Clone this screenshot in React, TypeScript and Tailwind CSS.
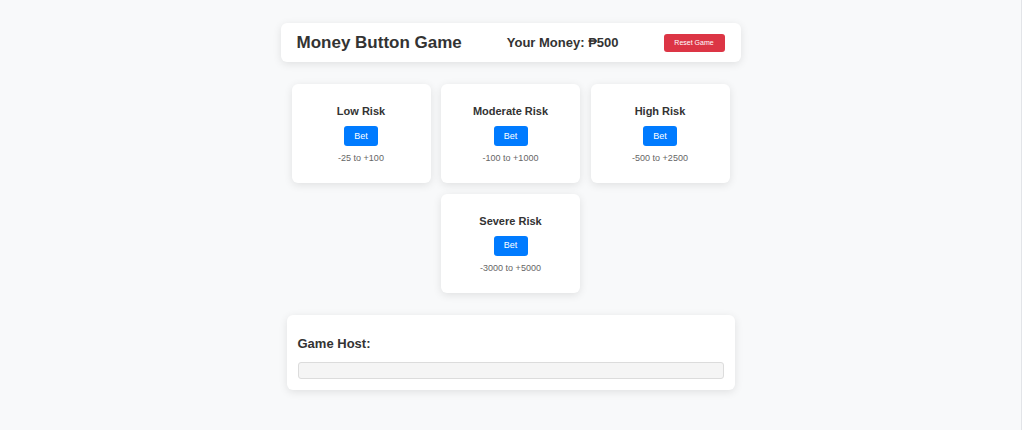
import React from "react";

const risks = [
  { name: "Low Risk", range: "-25 to +100" },
  { name: "Moderate Risk", range: "-100 to +1000" },
  { name: "High Risk", range: "-500 to +2500" },
  { name: "Severe Risk", range: "-3000 to +5000" },
];

function RiskCard({ name, range }: { name: string; range: string }) {
  return (
    <div className="flex h-[99px] w-[139px] flex-col items-center rounded-[6px] bg-white pt-[21px] shadow-[0_2px_8px_rgba(0,0,0,0.1)]">
      <h3 className="text-[11px] font-bold leading-[13px] text-[#333]">{name}</h3>
      <button className="mt-[8px] flex h-[20px] w-[34px] items-center justify-center rounded-[3px] bg-[#007bff] text-[9px] leading-none text-white">
        Bet
      </button>
      <p className="mt-[7px] text-[9px] leading-[11px] text-[#666]">{range}</p>
    </div>
  );
}

export default function App() {
  return (
    <div
      className="flex min-h-[430px] w-full bg-[#f8f9fa]"
      style={{ fontFamily: '"Liberation Sans", Arial, "DejaVu Sans", sans-serif' }}
    >
      <div className="flex flex-1 flex-col items-center pt-[23px]">
        <header className="flex h-[39px] w-[460px] items-center justify-between rounded-[6px] bg-white px-4 shadow-[0_2px_8px_rgba(0,0,0,0.1)]">
          <h1 className="text-[17px] font-bold leading-[20px] text-[#333]">Money Button Game</h1>
          <div className="text-[13px] font-bold leading-[16px] text-[#333]">Your Money: ₱500</div>
          <button className="flex h-[18px] w-[61px] items-center justify-center rounded-[3px] bg-[#dc3545] text-[7px] leading-none text-white">
            Reset Game
          </button>
        </header>

        <div className="mt-[22px] flex w-[460px] flex-wrap justify-center gap-x-[10.5px] gap-y-[10.5px]">
          {risks.map((r) => (
            <RiskCard key={r.name} name={r.name} range={r.range} />
          ))}
        </div>

        <section className="mt-[22px] w-[448px] rounded-[6px] bg-white px-[11px] pb-[11px] pt-[21px] shadow-[0_2px_8px_rgba(0,0,0,0.1)]">
          <h2 className="text-[13px] font-bold leading-[15px] text-[#333]">Game Host:</h2>
          <div className="mt-[11px] h-[17px] w-full rounded-[3px] border border-[#dcdcdc] bg-[#f5f5f5]" />
        </section>
      </div>
      <div className="w-px bg-[#e2e4e8]" />
      <div className="w-[2px] bg-white" />
    </div>
  );
}
